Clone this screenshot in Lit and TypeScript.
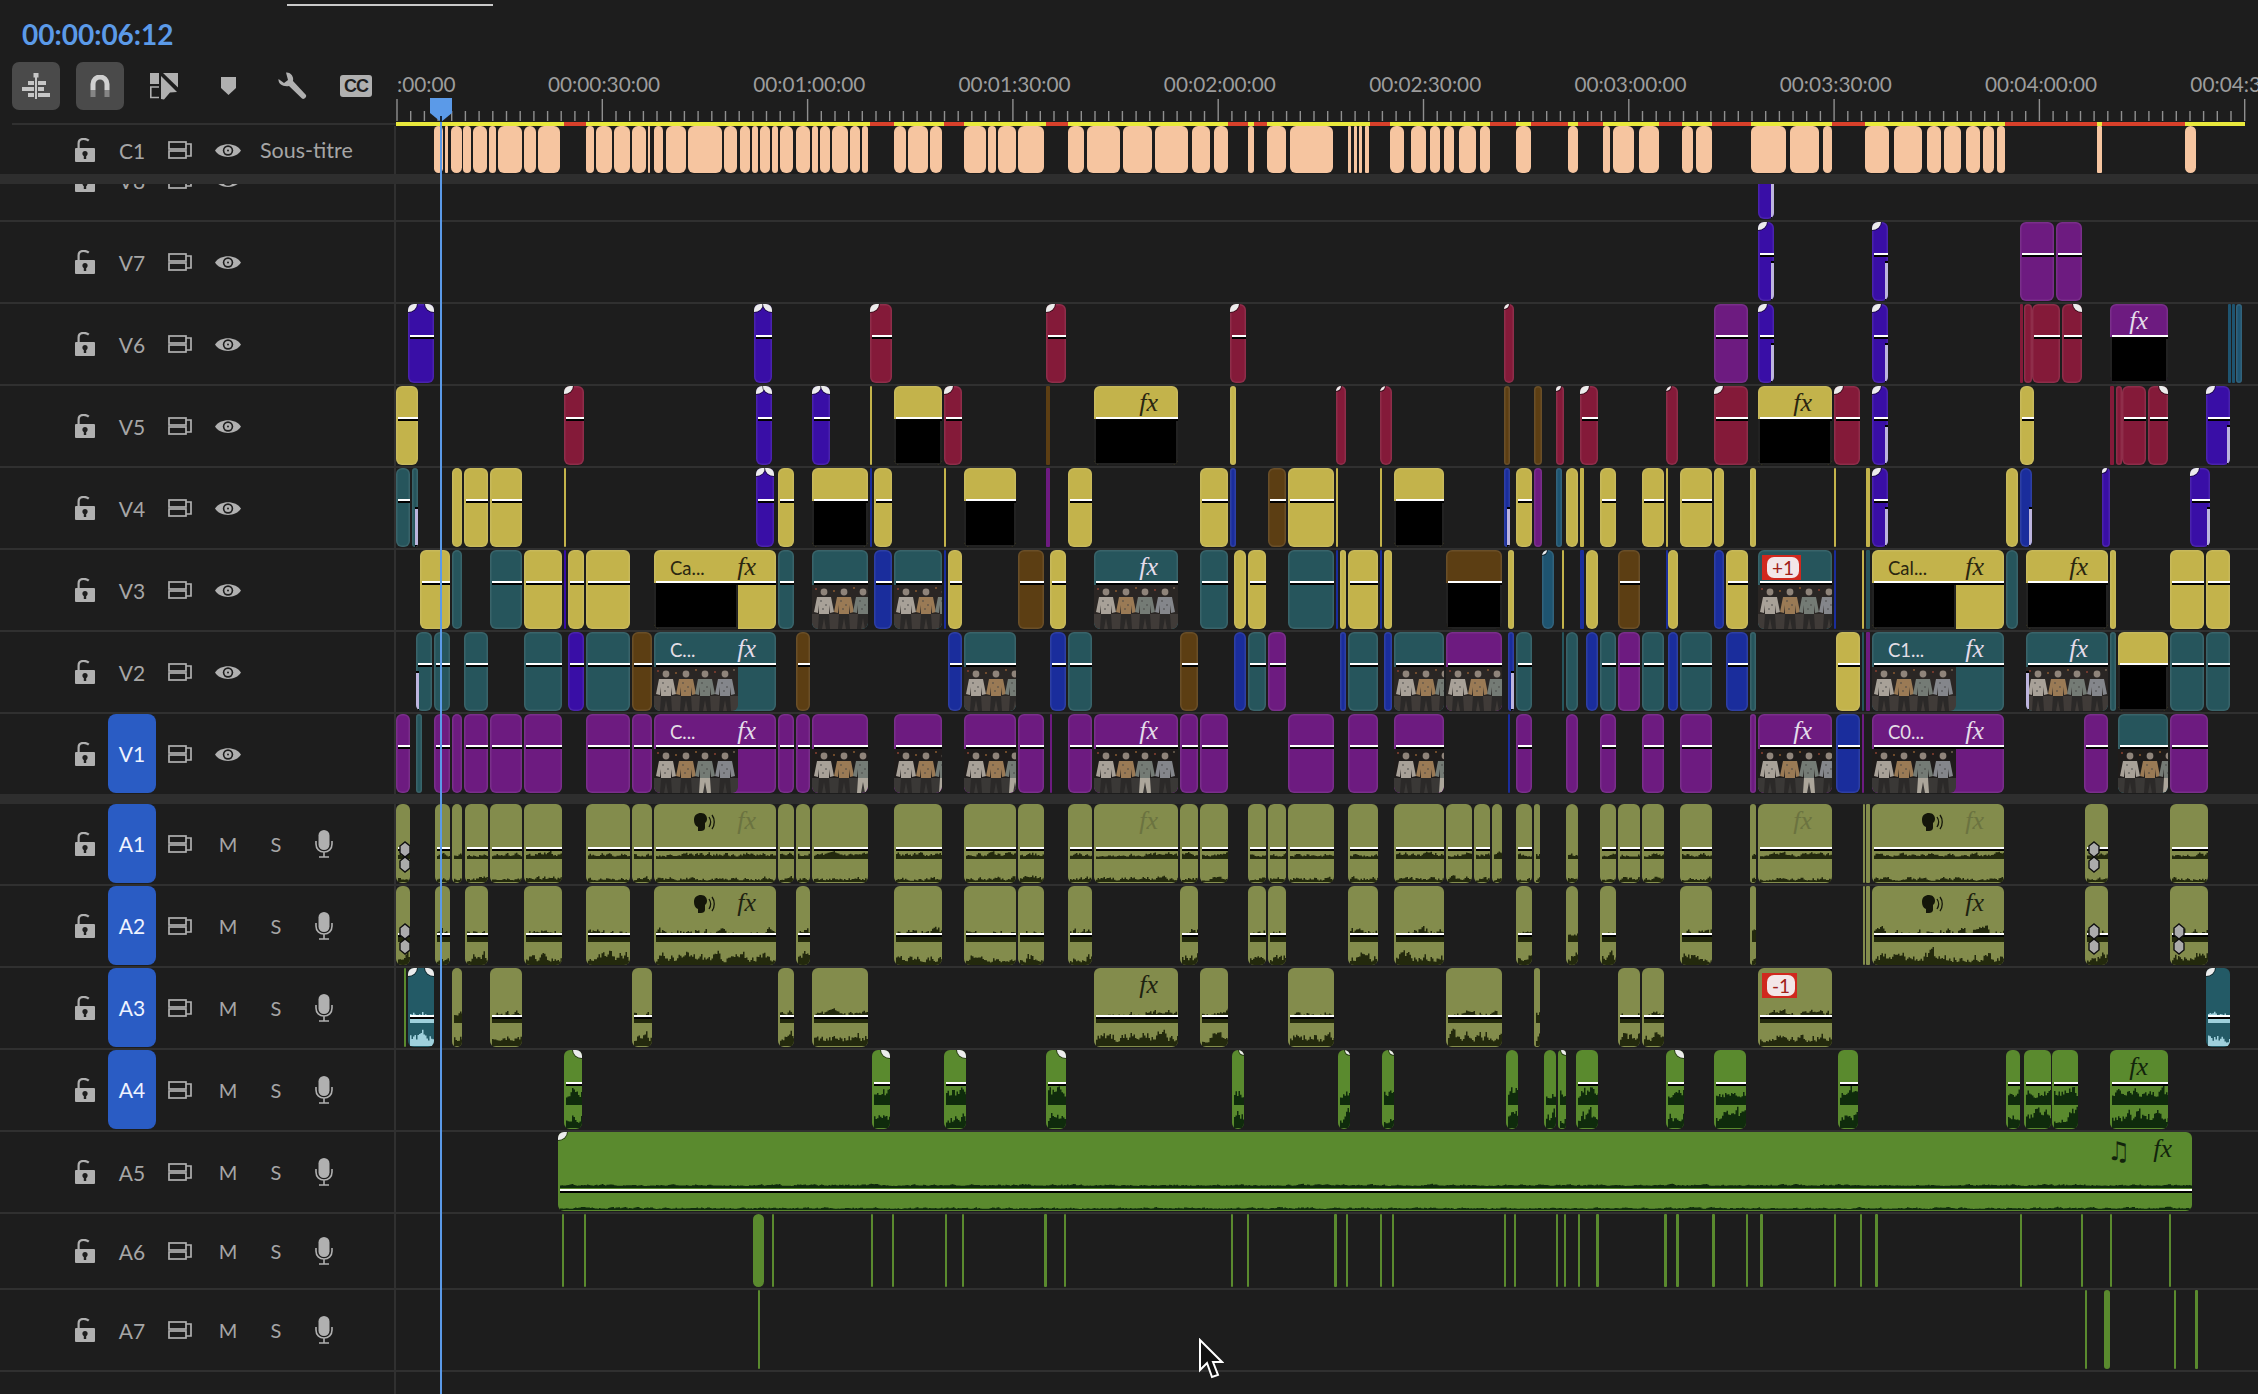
import { LitElement, html, svg, css, nothing } from "lit";

// clip rows: "x1 x2 colour flags..." in page pixels
// flags: L R fades, s l side strips, p b thumbs, f d fx, S speaker, K keyframes, wNN thumb width, tXX title, #XX badge
const ROWS: Record<string, string> = {
  C1: `434 443 e,445 448 e,451 462 e,463 471 e,473 487 e,489 496 e,498 522 e,524 536 e,538 560 e,586 594 e,596 612 e,614 630 e,632 646 e,648 650 e,654 663 e,666 686 e,688 722 e,724 737 e,740 750 e,752 758 e,760 770 e,772 778 e,780 793 e,796 810 e,812 818 e,820 830 e,832 848 e,850 860 e,862 868 e,894 906 e,908 928 e,930 942 e,964 986 e,988 996 e,998 1016 e,1018 1044 e,1068 1084 e,1087 1120 e,1123 1152 e,1155 1188 e,1192 1210 e,1214 1228 e,1248 1254 e,1267 1286 e,1290 1333 e,1348 1351 e,1354 1357 e,1359 1362 e,1365 1369 e,1390 1404 e,1411 1426 e,1430 1440 e,1444 1454 e,1459 1476 e,1480 1490 e,1516 1531 e,1568 1578 e,1603 1610 e,1613 1634 e,1639 1659 e,1682 1693 e,1696 1712 e,1751 1786 e,1790 1819 e,1823 1832 e,1865 1889 e,1894 1922 e,1927 1941 e,1944 1961 e,1966 1980 e,1983 1994 e,1997 2005 e,2097 2102 e,2185 2196 e`,
  V8: `1758 1774 i s`,
  V7: `1758 1774 i L s,1872 1888 i L s,2020 2054 p,2056 2082 p`,
  V6: `408 434 i L R,754 772 i L R,870 892 r L,1046 1066 r L,1230 1246 r L,1504 1514 r L,1714 1748 p,1758 1774 i L s,1872 1888 i L s,2020 2023 r,2024 2032 r,2032 2060 r,2062 2082 r R,2110 2168 p b f,2228 2231 u,2232 2235 u,2236 2242 u`,
  V5: `396 418 y,564 584 r L,756 772 i L R,812 830 i L R,870 872 y,894 942 y b,944 962 r L,1046 1050 n,1094 1178 y b f,1230 1236 y,1336 1346 r L,1380 1392 r L,1504 1510 n,1534 1542 n,1556 1564 r L,1580 1598 r L,1666 1678 r L,1714 1748 r L,1758 1832 y b f,1834 1860 r L,1872 1888 i L s,2020 2034 y,2110 2114 r,2116 2122 r,2122 2146 r,2148 2168 r R,2206 2230 i L s`,
  V4: `396 410 t,412 418 t s,452 462 y,464 488 y,490 522 y,564 566 y,756 774 i L R,778 794 y,812 868 y b,870 872 b,874 892 y,944 946 y,964 1016 y b,1046 1050 p,1068 1092 y,1200 1228 y,1230 1236 b,1268 1286 n,1288 1334 y,1336 1338 y,1380 1382 y,1394 1444 y b,1504 1510 b s,1516 1532 y,1534 1542 p,1556 1562 u,1566 1578 y,1580 1584 y,1600 1616 y,1642 1664 y,1666 1668 y,1680 1712 y,1714 1724 y,1750 1756 y,1834 1836 y,1866 1870 y,1872 1888 i L s,2006 2018 y,2020 2032 b s,2102 2110 i L,2190 2210 i L s`,
  V3: `420 450 y,452 462 t,490 522 t,524 562 y,564 566 i,568 584 y,586 630 y,654 776 y b w84 f tCa...,778 794 t,812 868 t p,874 892 b,894 942 t p,944 946 b,948 962 y,1018 1044 n,1050 1066 y,1094 1178 t p f,1200 1228 t,1234 1246 y,1248 1266 y,1288 1334 t,1336 1338 b,1340 1346 y,1348 1378 y,1380 1382 b,1384 1392 y,1446 1502 n b,1508 1514 y,1542 1554 u L,1562 1564 y,1580 1584 b,1586 1598 y,1618 1640 n,1666 1668 b,1668 1678 y,1714 1724 b,1726 1748 y,1758 1832 t p #+1,1834 1836 b,1862 1864 y,1866 1870 t,1872 2004 y b w84 f tCal...,2006 2018 t,2026 2108 y b f,2110 2116 y,2170 2204 y,2206 2230 y`,
  V2: `416 432 t l,434 450 t,464 488 t,524 562 t,568 584 i,586 630 t,632 652 n,654 776 t p w84 f tC...,796 810 n,948 962 b,964 1016 t p,1050 1066 b,1068 1092 t,1180 1198 n,1234 1246 b,1248 1266 t,1268 1286 p,1340 1346 b,1348 1378 t,1384 1392 b,1394 1444 t p,1446 1502 p p,1508 1514 b s,1516 1532 t,1562 1564 t,1566 1578 t,1586 1598 b,1600 1616 t,1618 1640 p,1642 1664 t,1668 1678 b,1680 1712 t,1726 1748 b,1750 1756 t,1836 1860 y,1862 1864 t,1866 1870 p,1872 2004 t p w84 f tC1...,2026 2108 t p f l,2110 2116 t,2118 2168 y b,2170 2204 t,2206 2230 t`,
  V1: `396 410 p,416 422 t,434 450 p,452 462 p,464 488 p,490 522 p,524 562 p,586 630 p,632 652 p,654 776 p p w84 f tC...,778 794 p,796 810 p,812 868 p p,894 942 p p,964 1016 p p,1018 1044 p,1050 1052 p,1068 1092 p,1094 1178 p p f,1180 1198 p,1200 1228 p,1288 1334 p,1348 1378 p,1394 1444 p p,1508 1510 b,1516 1532 p,1566 1578 p,1600 1616 p,1642 1664 p,1680 1712 p,1750 1756 p,1758 1832 p p f,1836 1860 b,1862 1864 p,1872 2004 p p w84 f tC0...,2084 2108 p,2118 2168 t p,2170 2208 p`,
  A1: `396 410 a K,435 450 a,452 462 a,465 488 a,490 522 a,524 562 a,586 630 a,632 652 a,654 776 a S d,778 794 a,796 810 a,812 868 a,894 942 a,964 1016 a,1018 1044 a,1068 1092 a,1094 1178 a d,1180 1198 a,1200 1228 a,1248 1266 a,1268 1286 a,1288 1334 a,1348 1378 a,1394 1444 a,1446 1472 a,1474 1490 a,1492 1502 a,1516 1532 a,1534 1540 a,1566 1578 a,1600 1616 a,1618 1640 a,1642 1664 a,1680 1712 a,1750 1756 a,1758 1832 a d,1863 1865 a,1866 1870 a,1872 2004 a S d,2085 2108 a K,2170 2208 a`,
  A2: `396 410 a K,435 450 a,465 488 a,524 562 a,586 630 a,654 776 a S f,796 810 a,894 942 a,964 1016 a,1018 1044 a,1068 1092 a,1180 1198 a,1248 1266 a,1268 1286 a,1348 1378 a,1394 1444 a,1516 1532 a,1566 1578 a,1600 1616 a,1680 1712 a,1750 1756 a,1863 1865 a,1866 1870 a,1872 2004 a S f,2085 2108 a K,2170 2208 a K`,
  A3: `404 406 g,408 434 w L R,452 462 a,490 522 a,632 652 a,778 794 a,812 868 a,1094 1178 a f,1200 1228 a,1288 1334 a,1446 1502 a,1534 1540 a,1618 1640 a,1642 1664 a,1758 1832 a #-1,2206 2230 w L`,
  A4: `564 582 g R,872 890 g R,944 966 g R,1046 1066 g R,1232 1244 g R,1338 1350 g R,1382 1394 g R,1506 1518 g,1544 1556 g,1558 1566 g R,1576 1598 g,1666 1684 g R,1714 1746 g,1838 1858 g,2006 2020 g,2024 2051 g,2052 2078 g,2110 2168 g f`,
  A5: `558 2192 g L f M`,
  A6: `562 563 g,584 585 g,753 764 g,772 773 g,871 872 g,892 893 g,945 946 g,962 963 g,1044 1047 g,1064 1065 g,1231 1232 g,1247 1248 g,1334 1337 g,1346 1347 g,1380 1382 g,1392 1393 g,1504 1505 g,1514 1515 g,1556 1558 g,1564 1566 g,1578 1580 g,1596 1599 g,1664 1667 g,1676 1679 g,1712 1715 g,1746 1747 g,1760 1763 g,1834 1835 g,1860 1861 g,1875 1878 g,2020 2021 g,2081 2082 g,2110 2111 g,2169 2170 g`,
  A7: `758 760 g,2085 2086 g,2104 2110 g,2174 2176 g,2195 2198 g`,
};

// [bottom, floor, amplitude] of the two waveform channels, measured from the clip top
const WAVES: Record<string, number[][]> = {
  A1: [[55, 2, 4], [78, 1, 4]],
  A2: [[56, 6, 7], [79, 2, 10]],
  A3: [[55, 6, 6], [78, 3, 10]],
  A4: [[55, 6, 11], [78, 4, 12]],
  A5: [[56, 2, 1.5], [78, 1, 1.5]],
};

const LANE_X = 396;
const MAJOR = 205.3;
const RED = [[564, 586], [870, 894], [944, 964], [1046, 1068], [1228, 1248], [1254, 1267], [1370, 1390], [1490, 1516], [1531, 1568], [1578, 1603], [1659, 1682], [1712, 1751], [1832, 1865], [2005, 2097], [2102, 2185]];
const LABELS = [":00:00", "00:00:30:00", "00:01:00:00", "00:01:30:00", "00:02:00:00", "00:02:30:00", "00:03:00:00", "00:03:30:00", "00:04:00:00", "00:04:30:00"];

function parse(row: string) {
  return row.split(",").map((s) => {
    const [a, b, color, ...flags] = s.trim().split(/\s+/);
    return { x1: +a, x2: +b, color, flags };
  });
}

function wavePath(x: number, w: number, [bottom, floor, amp]: number[]) {
  let seed = x * 9301 + bottom * 49297;
  let d = "";
  let last = 0.4;
  for (let i = 2; i < w; i += 1.5) {
    seed = (seed * 9301 + 49297) % 233280;
    last = last * 0.6 + (seed / 233280) * 0.4;
    const h = (floor + last * last * amp * 2).toFixed(1);
    d += `M${i} ${bottom}v-${h}h1.5v${h}z`;
  }
  return d;
}

const lockIcon = html`<svg class="ico lock" width="20" height="24" viewBox="0 0 20 24"><path d="M3.6 10V5.4C3.6 2.2 6 .9 8.8 .9c2 0 3.6.6 5 1.8" fill="none" stroke="#b0b0b0" stroke-width="2.2"/><rect y="10" width="20" height="14" rx="1" fill="#b0b0b0"/><circle cx="10" cy="15.6" r="2.6" fill="#1d1d1d"/><rect x="8.8" y="16" width="2.4" height="5" fill="#1d1d1d"/></svg>`;
const syncIcon = html`<svg class="ico" width="24" height="18" viewBox="0 0 24 18" fill="none" stroke="#b0b0b0" stroke-width="1.7"><rect x="1" y="1" width="17" height="7"/><rect x="1" y="10" width="17" height="7"/><path d="M18 3h5v12h-5"/></svg>`;
const eyeIcon = html`<svg class="ico" width="26" height="19" viewBox="0 0 26 19"><path d="M0 9.5C5 1 21 1 26 9.5 21 18 5 18 0 9.5Z" fill="#b0b0b0"/><circle cx="13" cy="9.5" r="5.2" fill="#1d1d1d"/><circle cx="13" cy="9.5" r="3.6" fill="#b0b0b0"/><circle cx="13" cy="9.5" r="1" fill="#1d1d1d"/></svg>`;
const micIcon = html`<svg class="ico" width="18" height="28" viewBox="0 0 18 28"><rect x="3.5" width="11" height="20" rx="5.5" fill="#b0b0b0"/><path d="M1 11v3c0 5 3.5 8 8 8s8-3 8-8v-3M9 22v5M4 27h10" fill="none" stroke="#b0b0b0" stroke-width="1.6"/></svg>`;
const speakIcon = html`<svg class="speak" width="23" height="18" viewBox="0 0 23 18"><path d="M1 7C1 2 4 0 8 0s6 3 6 6c0 2-1 3-2 4v5c0 2-2 3-4 3H5v-4C2 13 1 10 1 7Z" fill="#14160a"/><path d="M16 4c2 3 2 7 0 10M19 2c3 4 3 10 0 14" fill="none" stroke="#14160a" stroke-width="1.3"/></svg>`;
const hexIcon = html`<svg class="hex" width="14" height="32" viewBox="0 0 14 32"><path d="M1 5 6 1l5 4v7l-5 4-5-4ZM1 20l5-4 5 4v7l-5 4-5-4Z" fill="#ababab" stroke="#111" stroke-width="1.4"/></svg>`;

// the four people on the bench, kept soft since it stands in for a video frame
function scene(dark: boolean) {
  const bg = dark ? "#1f1c1b" : "#2a2624";
  const bench = dark ? "#3a3836" : "#403b38";
  const people = [[12, "#a8a198"], [32, "#9a7a55"], [51, "#747b75"], [71, "#84868b"]] as [number, string][];
  return html`<svg width="84" height="44" viewBox="0 0 84 44"><rect width="84" height="44" fill=${bg}/><rect y="29" width="84" height="15" fill=${bench}/><circle cx="4" cy="4" r="1" fill="#8a4030"/><circle cx="22" cy="6" r="1" fill="#8a5a30"/><circle cx="42" cy="3" r="1" fill="#8a5a30"/><circle cx="61" cy="5" r="1" fill="#8a4030"/><circle cx="80" cy="3" r="1" fill="#706050"/>
    ${people.map(([x, c], i) => svg`<circle cx=${x} cy="7" r="3.4" fill="#8f847a"/><path d="M${x - 7} 12h14l3 15-4 1-1-8v9h-10v-9l-1 8-4-1z" fill=${c}/><path d="M${x - 5} 29h10l1 15h-4l-2-11-2 11h-4z" fill=${dark && i === 2 ? "#aca69b" : "#2b2928"}/><circle cx=${x - 3} cy="16" r=".8" fill="#444"/><circle cx=${x + 2} cy="20" r=".8" fill="#444"/><circle cx=${x - 1} cy="24" r=".8" fill="#444"/>`)}</svg>`;
}

function renderClip(track: string, c: { x1: number; x2: number; color: string; flags: string[] }) {
  const w = c.x2 - c.x1;
  const has = (f: string) => c.flags.includes(f);
  const value = (p: string) => c.flags.find((f) => f.startsWith(p) && f.length > 1)?.slice(1);
  const thumbW = value("w") ?? w;
  const waves = WAVES[track];
  const small = w < 14 ? "small" : "";
  return html`<div class="clip c-${c.color} ${w < 6 ? "thin" : ""}" style="left:${c.x1 - LANE_X}px;width:${Math.max(w, 2)}px">
    ${has("p") ? html`<div class="thumb" style="width:${thumbW}px">${scene(track === "V1")}</div>` : nothing}
    ${has("b") ? html`<div class="black" style="width:${thumbW}px"></div>` : nothing}
    ${waves && w >= 6 ? html`<svg class="wave" width=${w} height="80"><path d=${wavePath(c.x1, w, waves[0]) + wavePath(c.x1 + 7, w, waves[1])}/></svg>` : nothing}
    ${w >= 14 ? html`<div class="lvl"></div>` : nothing}
    ${has("L") ? html`<div class="fade fl ${small}"></div>` : nothing}
    ${has("R") ? html`<div class="fade fr ${small}"></div>` : nothing}
    ${has("s") ? html`<div class="strip sr"></div>` : nothing}
    ${has("l") ? html`<div class="strip sl"></div>` : nothing}
    ${has("K") ? hexIcon : nothing}
    ${value("t") ? html`<span class="title">${value("t")}</span>` : nothing}
    ${has("S") ? speakIcon : nothing}
    ${has("M") ? html`<span class="note">♫</span>` : nothing}
    ${has("f") ? html`<span class="fx">fx</span>` : nothing}
    ${has("d") ? html`<span class="fx dim">fx</span>` : nothing}
    ${value("#") ? html`<span class="badge"><b>${value("#")}</b></span>` : nothing}
  </div>`;
}

class AppRoot extends LitElement {
  static styles = css`
    :host {
      display: block;
      position: relative;
      width: 2258px;
      height: 1394px;
      overflow: hidden;
      background: #1d1d1d;
      font-family: Lato, "Open Sans", sans-serif;
      color: #a6a6a6;
    }
    .page { display: flex; flex-direction: column; height: 100%; }
    .tabs { height: 8px; padding-top: 4px; box-sizing: border-box; flex: none; }
    .tabs div { width: 206px; height: 2px; margin-left: 287px; background: #c9c9c9; }
    .top { display: flex; height: 118px; flex: none; }
    .left { width: 396px; flex: none; padding-top: 8px; box-sizing: border-box; }
    .tc { margin-left: 22px; height: 36px; line-height: 36px; font-size: 28px; font-weight: 700; color: #5b9ae8; }
    .tools { display: flex; gap: 16px; margin: 10px 0 0 12px; padding-bottom: 13px; border-bottom: 2px solid #303030; }
    .tool { width: 48px; height: 48px; border-radius: 7px; display: flex; align-items: center; justify-content: center; }
    .tool.on { background: #4a4a4a; }
    .cc { width: 32px; height: 22px; border-radius: 3px; background: #b0b0b0; color: #1d1d1d; font: 700 18px/22px "Liberation Sans", sans-serif; letter-spacing: -1px; text-align: center; }
    .ruler { flex: 1; position: relative; overflow: hidden; }
    .ruler span { position: absolute; top: 64px; transform: translateX(-50%); font-size: 20.8px; line-height: 24px; color: #9c9c9c; white-space: nowrap; }
    .ruler span.first { transform: none; }
    .ticks { position: absolute; left: 0; top: 91px; }
    .bar { position: absolute; left: 0; bottom: 0; width: 1849px; height: 4px; background: #e9e93c; }
    .bar i { position: absolute; top: 0; height: 4px; background: #d8402a; }

    .track { display: flex; height: 82px; flex: none; border-top: 2px solid #303030; box-sizing: border-box; }
    .track.a1, .track.c1 { border-top: 0; height: 80px; }
    .track.c1 { height: 48px; --ly: 100px; }
    .track.a6 { height: 76px; }
    .track.v8 { height: 36px; border-top: 0; align-items: flex-end; overflow: hidden; }
    .track.v8 > * { height: 80px; }
    .track.rest { flex: 1; height: auto; }
    .v { --ly: 31px; }
    .a1 { --ly: 43px; }
    .a2, .a3 { --ly: 47px; }
    .a4 { --ly: 32px; }
    .a5 { --ly: 57px; }
    .band { height: 10px; flex: none; background: #2e2e2e; }

    .hdr { width: 396px; flex: none; box-sizing: border-box; border-right: 2px solid #303030; padding-left: 60px; display: grid; grid-template-columns: repeat(6, 48px); align-items: center; justify-items: center; position: relative; }
    .ico { display: block; }
    .lock { margin-left: 2px; }
    .name { font-size: 21px; }
    .tgt { align-self: stretch; justify-self: stretch; background: #2a5cc4; border-radius: 8px; color: #eef3ff; display: flex; align-items: center; justify-content: center; font-size: 21px; margin-bottom: 1px; }
    .ms { font-size: 20px; }
    .hint { font-size: 21.500px; white-space: nowrap; justify-self: start; margin-left: 8px; }
    .lane { flex: 1; position: relative; overflow: hidden; }

    .clip { position: absolute; top: 0; bottom: 1px; border-radius: 6px; overflow: hidden; box-shadow: inset 0 0 0 1.5px rgba(255, 255, 255, 0.09); }
    .clip.thin { border-radius: 1px; box-shadow: none; }
    .c-y { background: #c3b34b; }
    .c-t { background: #26555c; }
    .c-i { background: #390ea6; }
    .c-r { background: #841a39; }
    .c-p { background: #6d1b80; }
    .c-n { background: #5c3e13; }
    .c-b { background: #1a2d9c; }
    .c-u { background: #1e5470; }
    .c-a { background: #838c4c; box-shadow: none; }
    .c-g { background: #5a8a2e; box-shadow: none; }
    .c-w { background: #235a66; box-shadow: none; }
    .c-e { background: #f6c5a0; box-shadow: none; }
    .wave { position: absolute; left: 0; top: 0; fill: #23290d; }
    .c-g .wave { fill: #0f2b0c; }
    .c-w .wave { fill: #9fd0dc; }
    .lvl { position: absolute; left: 2px; right: 0; top: var(--ly); height: 2px; background: #fff; border-bottom: 2px solid #000; }
    .thumb { position: absolute; left: 0; top: calc(var(--ly) + 4px); bottom: 0; overflow: hidden; border-radius: 0 0 6px 6px; }
    .thumb svg { display: block; filter: blur(0.5px); }
    .black { position: absolute; left: 0; top: calc(var(--ly) + 2px); bottom: 0; box-sizing: border-box; background: #000; border: 2px solid #222; border-top: 0; }
    .fade { position: absolute; top: 0; width: 9px; height: 8px; background: #ececec; box-shadow: 0 0 0 1px rgba(0, 0, 0, 0.55); }
    .fade.small { width: 5px; height: 5px; }
    .fl { left: 0; border-radius: 0 0 100% 0; }
    .fr { right: 0; border-radius: 0 0 0 100%; }
    .strip { position: absolute; width: 3px; top: calc(var(--ly) + 8px); bottom: 0; background: #bdb5de; border-top: 2px solid #000; border-bottom: 2px solid #000; }
    .sr { right: 0; }
    .sl { left: 0; }
    .hex { position: absolute; left: 3px; top: 37px; }
    .title { position: absolute; left: 16px; top: 6px; font-size: 18.5px; line-height: 24px; color: #e4dfe6; }
    .c-y .title { color: #2a2610; }
    .fx { position: absolute; right: 20px; top: 2px; font: italic 26px/30px "Liberation Serif", serif; color: #e4dcea; }
    .c-y .fx { color: #2a2610; }
    .c-a .fx { color: #1e2210; }
    .c-g .fx { color: #12240c; }
    .fx.dim, .c-a .fx.dim { color: #6b7340; }
    .speak { position: absolute; right: 60px; top: 9px; }
    .note { position: absolute; right: 62px; top: 4px; font: 26px/30px "DejaVu Sans", sans-serif; color: #12240c; }
    .badge { position: absolute; left: 4px; top: 5px; background: #d0281e; padding: 2px 2px 2px 5px; display: block; }
    .badge b { display: block; background: #f3e6e8; border-radius: 7px; padding: 0 5px; font: 400 19px/21px Lato, sans-serif; color: #a02018; }

    .head { position: absolute; left: 430px; top: 98px; pointer-events: none; }
    .line { position: absolute; left: 440px; top: 115px; bottom: 0; width: 2px; background: #5b9ae8; }
    .cursor { position: absolute; left: 1198px; top: 1338px; }
  `;

  renderTrack(name: string, cls: string, kind: "v" | "a" | "c", target = false) {
    const label = target
      ? html`<div class="tgt">${name}</div>`
      : html`<div class="name">${name}</div>`;
    return html`<div class="track ${kind === "a" ? "" : "v"} ${cls}">
      <div class="hdr">
        ${lockIcon}${label}${syncIcon}
        ${kind === "a"
          ? html`<div class="ms">M</div><div class="ms">S</div>${micIcon}`
          : eyeIcon}
        ${kind === "c" ? html`<div class="hint">Sous-titre</div>` : nothing}
      </div>
      <div class="lane">${parse(ROWS[name]).map((c) => renderClip(name, c))}</div>
    </div>`;
  }

  renderRuler() {
    let ticks = "";
    for (let i = 0; i <= 135; i++) {
      const x = (1 + (i * MAJOR) / 15).toFixed(1);
      ticks += i % 15 === 0 ? `M${x} 0v22` : `M${x} 12v10`;
    }
    return html`<div class="ruler">
      ${LABELS.map((t, i) =>
        i === 0
          ? html`<span class="first" style="left:1px">${t}</span>`
          : html`<span style="left:${208 + (i - 1) * MAJOR}px">${t}</span>`
      )}
      <svg class="ticks" width="1862" height="23"><path d=${ticks} stroke="#8f8f8f" stroke-width="1.4"/></svg>
      <div class="bar">${RED.map(([a, b]) => html`<i style="left:${a - LANE_X}px;width:${b - a}px"></i>`)}</div>
    </div>`;
  }

  render() {
    return html`<div class="page">
        <div class="tabs"><div></div></div>
        <div class="top">
          <div class="left">
            <div class="tc">00:00:06:12</div>
            <div class="tools">
              <div class="tool on">
                <svg width="28" height="26" viewBox="0 0 28 26" fill="#c6c6c6"><rect x="13" width="2" height="26"/><rect x="11.500" width="5" height="4.500"/><rect x="6" y="8" width="6" height="4"/><rect x="16" y="8" width="8" height="4"/><rect y="14" width="12" height="4"/><rect x="16" y="14" width="6" height="4"/><rect x="6" y="20" width="6" height="4"/><rect x="16" y="20" width="12" height="4"/></svg>
              </div>
              <div class="tool on">
                <svg width="20" height="22" viewBox="0 0 20 22"><path d="M3 15V9a7 7 0 0 1 14 0v6" fill="none" stroke="#cfcfcf" stroke-width="5"/><rect x=".5" y="15" width="5" height="7" fill="#858585"/><rect x="14.500" y="15" width="5" height="7" fill="#858585"/></svg>
              </div>
              <div class="tool">
                <svg width="28" height="27" viewBox="0 0 28 27" fill="#b0b0b0"><rect width="9" height="11"/><path d="M9 14H.8v10.500H9" fill="none" stroke="#b0b0b0" stroke-width="1.6"/><path d="M13 0h15v14.500Z"/><path d="M11 3l16 16-7 .500-6 7-3-.500Z"/></svg>
              </div>
              <div class="tool">
                <svg width="15" height="18" viewBox="0 0 15 18"><path d="M0 0h15v11l-7.500 7L0 11Z" fill="#b0b0b0"/></svg>
              </div>
              <div class="tool">
                <svg width="29" height="28" viewBox="0 0 29 28"><path d="M.5 7 6 11l4-3L8 .5c5-.5 8 4.500 7 8.500l13 14c1 2-2 5-4 3.500L11 14C5 15 0 12 .5 7Z" fill="#b0b0b0"/></svg>
              </div>
              <div class="tool"><div class="cc">CC</div></div>
            </div>
          </div>
          ${this.renderRuler()}
        </div>
        ${this.renderTrack("C1", "c1", "c")}
        <div class="band"></div>
        ${this.renderTrack("V8", "v8", "v")}
        ${this.renderTrack("V7", "", "v")}
        ${this.renderTrack("V6", "", "v")}
        ${this.renderTrack("V5", "", "v")}
        ${this.renderTrack("V4", "", "v")}
        ${this.renderTrack("V3", "", "v")}
        ${this.renderTrack("V2", "", "v")}
        ${this.renderTrack("V1", "", "v", true)}
        <div class="band"></div>
        ${this.renderTrack("A1", "a1", "a", true)}
        ${this.renderTrack("A2", "a2", "a", true)}
        ${this.renderTrack("A3", "a3", "a", true)}
        ${this.renderTrack("A4", "a4", "a", true)}
        ${this.renderTrack("A5", "a5", "a")}
        ${this.renderTrack("A6", "a6", "a")}
        ${this.renderTrack("A7", "", "a")}
        <div class="track rest"><div class="hdr"></div></div>
      </div>
      <div class="line"></div>
      <svg class="head" width="22" height="24" viewBox="0 0 22 24"><path d="M0 0h22v15l-11 9L0 15Z" fill="#5b9ae8"/><rect x="10" y="18" width="2" height="6" fill="#14263f"/></svg>
      <svg class="cursor" width="26" height="42" viewBox="0 0 26 42"><path d="M2 2v30l7-7 5 14 6-2-5-13h9Z" fill="#111" stroke="#fff" stroke-width="2"/></svg>`;
  }
}

customElements.define("app-root", AppRoot);
